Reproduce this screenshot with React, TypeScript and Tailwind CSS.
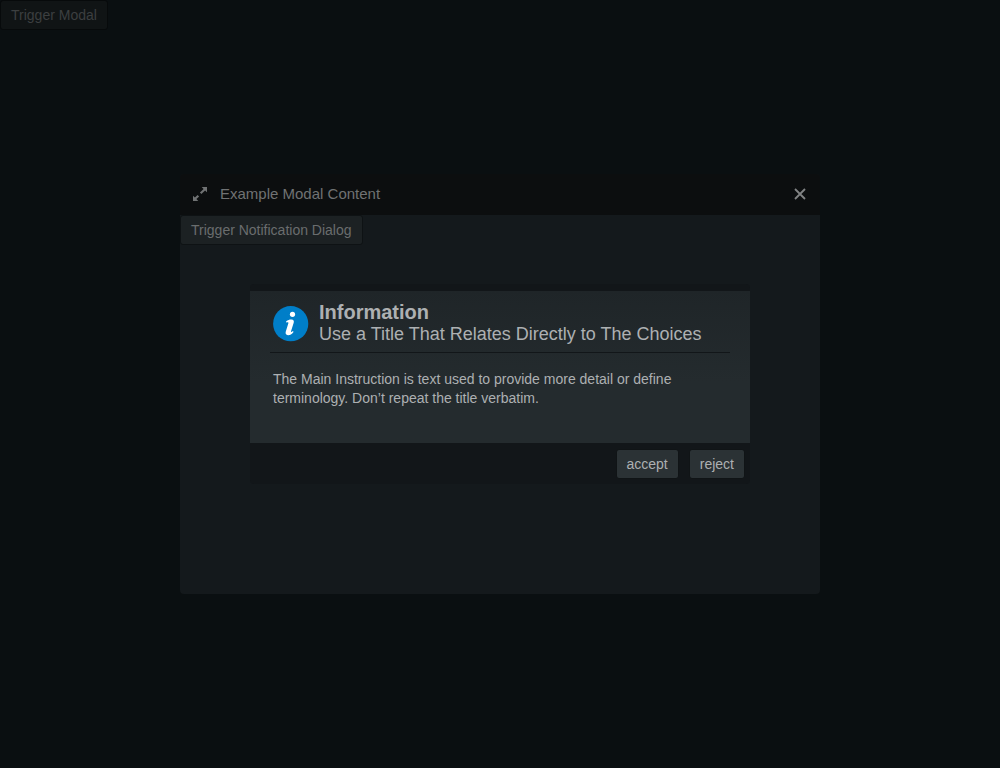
import React from "react";

type ButtonProps = {
  className: string;
  children: React.ReactNode;
};

function PushButton({ className, children }: ButtonProps) {
  return (
    <button
      type="button"
      className={`h-[30px] rounded-[3px] border px-2.5 text-sm leading-7 whitespace-nowrap ${className}`}
    >
      {children}
    </button>
  );
}

function ExpandIcon() {
  return (
    <svg viewBox="0 0 16 16" className="block size-4" fill="currentColor" aria-hidden="true">
      <path d="M9.700 1H15v5.300l-1.900-1.900-3.700 3.700-1.500-1.500 3.700-3.700z" />
      <path d="M1 9.700V15h5.300l-1.900-1.900 2.700-2.700-1.500-1.500-2.700 2.700z" />
    </svg>
  );
}

function CloseIcon() {
  return (
    <svg viewBox="0 0 12 12" className="block size-3" fill="none" stroke="currentColor" strokeWidth="1.800" aria-hidden="true">
      <path d="M1 1l10 10M11 1L1 11" />
    </svg>
  );
}

function InfoIcon() {
  return (
    <svg viewBox="0 0 36 36" className="size-9 shrink-0" aria-hidden="true">
      <circle cx="17.700" cy="17.700" r="17.600" fill="#007ec8" />
      <circle cx="19.500" cy="8.300" r="2.600" fill="#fff" />
      <path
        d="M13.200 15.200c1.700-1.200 3.500-1.800 5.200-1.700 2.100.1 2.900 1.400 2.300 3.300l-2.600 8.300c-.3.900 0 1.200.7.700l1.200-.9.500 1c-1.700 2.200-3.600 3.400-5.500 3.300-2.100-.1-2.800-1.600-2.200-3.600l2.500-8c.3-1-.1-1.400-.9-1.300l-1.200.2z"
        fill="#fff"
      />
    </svg>
  );
}

function NotificationDialog() {
  return (
    <section
      role="alertdialog"
      aria-labelledby="notice-title"
      aria-describedby="notice-text"
      className="w-full max-w-[500px] overflow-hidden rounded-[4px] bg-[#121619] text-[#adb0b2]"
    >
      <div className="mt-[7px] bg-linear-to-b from-[#1f2528] to-[#242b2e] to-60% px-5 pb-[35px]">
        <header className="flex items-center border-b border-[#121619] px-[3px] pt-[11px] pb-[7px]">
          <InfoIcon />
          <h2 id="notice-title" className="ml-2.5 text-lg leading-[22px]">
            <strong className="block text-xl leading-[21px]">Information</strong>
            Use a Title That Relates Directly to The Choices
          </h2>
        </header>
        <p id="notice-text" className="px-[3px] pt-[17px] text-sm leading-[19px]">
          The Main Instruction is text used to provide more detail or define terminology. Don’t repeat the title verbatim.
        </p>
      </div>
      <footer className="flex justify-end gap-2.5 px-[5px] pt-1.5 pb-[5px]">
        <PushButton className="border-[#101416] bg-[#2b3235]">accept</PushButton>
        <PushButton className="border-[#101416] bg-[#2b3235]">reject</PushButton>
      </footer>
    </section>
  );
}

export default function App() {
  return (
    <main className="relative min-h-screen bg-[#0a0f11] font-['Liberation_Sans',Arial,sans-serif]">
      <PushButton className="block border-[#070a0b] bg-[#101415] text-[#3c3f40]">Trigger Modal</PushButton>
      <div className="absolute inset-0 flex items-center justify-center">
        <section role="dialog" aria-labelledby="modal-title" className="flex min-h-[420px] w-full max-w-[640px] flex-col overflow-hidden rounded-[4px] bg-[#14191c]">
          <header className="flex h-[41px] items-center bg-[#0c0e0f] px-3 pb-px text-[#707273]">
            <button type="button" aria-label="Expand"><ExpandIcon /></button>
            <h1 id="modal-title" className="ml-3 flex-1 text-[15px] leading-6">Example Modal Content</h1>
            <button type="button" aria-label="Close" className="p-0.5 text-[#818384]"><CloseIcon /></button>
          </header>
          <PushButton className="self-start border-[#0e1214] bg-[#1c2123] text-[#6a6d6e]">Trigger Notification Dialog</PushButton>
        </section>
      </div>
      <div className="absolute inset-0 flex items-center justify-center">
        <NotificationDialog />
      </div>
    </main>
  );
}
